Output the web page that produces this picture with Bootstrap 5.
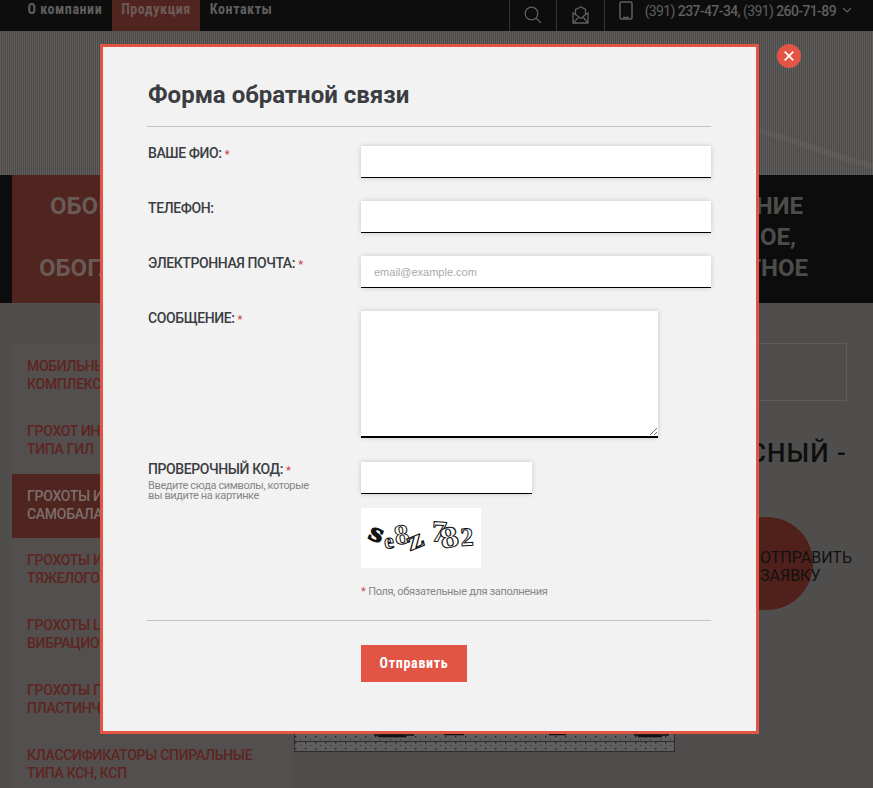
<!DOCTYPE html>
<html lang="ru"><head><meta charset="utf-8"><title>Форма обратной связи</title>
<link href="https://cdn.jsdelivr.net/npm/bootstrap@5.3.0/dist/css/bootstrap.min.css" rel="stylesheet">
<style>
html,body{height:788px;overflow:hidden}
body{background:#504e4d;font-family:Roboto,"Liberation Sans",sans-serif;position:relative}
.topbar{height:31px;background:#0d0d0d;color:#5f5f5f}
.toplink{font:700 14px/19px "Roboto Condensed","Liberation Sans Narrow",Roboto,sans-serif;letter-spacing:.55px;color:#5f5f5f;text-decoration:none;padding:0 9.5px;height:31px}
.toplink-on{background:#50251f;color:#6d5b57}
.topnav{padding-left:18px}
.topcell{width:47.5px;height:31px;border-left:1px solid #333}
.topcell svg{margin-top:-2px}
.phonecell{border-left:1px solid #333;height:31px;padding-left:14px;padding-right:21px;font-size:14px;font-weight:500;letter-spacing:-.6px;line-height:22px;gap:12px}
.chev{margin:7px 0 0 -6px}
.phicon{margin-top:1px}
.hero{height:144px;background:repeating-linear-gradient(90deg,#605e5c 0 1px,#4c4a49 1px 2px);overflow:hidden}
.hero svg{display:block}
.band{height:128px;background:#0c0c0c;color:#4e4c4a;font-size:24px;font-weight:700;line-height:31px;overflow:hidden}
.bandleft{width:290px;margin-left:12px;background:#50251f;color:#6a5a56;padding-top:16px;white-space:nowrap}
.bandright{padding-top:16px;padding-right:65px;text-align:right;white-space:nowrap}
.pl38{padding-left:38px}.pl27{padding-left:27px}.pr5{padding-right:5px}.pr12{padding-right:12px}
.sidemenu{width:282px;margin-left:12px;margin-top:41px;flex:none;background:#524f4e}
.sideitem{height:64.8px;padding:13px 15px 0;display:block;font-size:14px;font-weight:500;line-height:18px;letter-spacing:-.28px;text-transform:uppercase;color:#5f2420;text-decoration:none}
.sideitem-on{background:#50251f;color:#7d6f6b}
.maincol{flex:1;padding:40px 26px 0 0;min-width:0}
.topbox{height:58px;border:1px solid #5f5d5b}
.bigtitle{font-size:26px;font-weight:500;letter-spacing:1.05px;line-height:32px;color:#0e0e0e;margin:36px 0 0;white-space:nowrap}
.ctawrap{margin:48px -5px 0 0}
.cta{position:relative;font-size:16px;line-height:18px;color:#111;text-align:left;padding-top:32px;height:93px;width:92px}
.ctadot{position:absolute;left:-40px;top:0;width:93px;height:93px;border-radius:50%;background:#50201a}
.ctatxt{position:relative;display:block}
.drawing{margin:124px 0 0 0;display:block}
.dlg{position:absolute;left:100px;top:44px;width:659px;height:690px;border:3px solid #e25545;background:#f2f2f2;padding:25px 45px 0 44px;color:#3a3d42}
.dlgclose{position:absolute;left:777px;top:44px;width:24px;height:24px;border-radius:50%;background:#e25545;border:0;padding:0}
.dlgtitle{font-size:24px;font-weight:700;line-height:46px;margin:0;padding-left:1px;color:#3a3d42}
.dlgline{height:1px;background:#c4c4c4;margin:8px 0 0;opacity:1;border:0;width:564px}
.frow{display:flex;margin-bottom:23px}
.flabel{width:214px;flex:none;font-size:14px;font-weight:500;letter-spacing:-.4px;line-height:14px;padding-left:1px;color:#3a3d42}
.req{color:#cc4650;font-size:11px;letter-spacing:0}
.fhint{display:block;font-size:11px;font-weight:400;line-height:10px;letter-spacing:-.38px;color:#85878a;margin-top:3px}
.finput.form-control{width:352px;height:32px;border:0;border-bottom:1px solid #000;border-radius:0;background:#fff;box-shadow:0 0 5px rgba(0,0,0,.18);padding:0 13px;font-family:"Liberation Sans",sans-serif;font-size:11px}
.finput.form-control::placeholder{color:#a9a9a9}
.fshort.form-control{width:171px}
.farea.form-control{width:297px;height:127px;border:0;border-bottom:2px solid #000;border-radius:0;box-shadow:0 0 5px rgba(0,0,0,.18);background:#fff;min-height:0}
.capbox{display:block;margin:-16px 0 0 214px;background:#fff}
.capnote{margin:17px 0 0 214px;font-size:11px;line-height:14px;letter-spacing:-.35px;color:#85878a}
.sendbtn.btn{margin:24px 0 0 214px;width:106px;height:37px;background:#e25545;border:0;border-radius:0;color:#fff;padding:0;font:700 14px/37px "Roboto Condensed","Liberation Sans Narrow",Roboto,sans-serif;letter-spacing:.7px}
</style></head><body>
<div class="topbar d-flex">
 <nav class="topnav d-flex">
  <a class="toplink" href="#">О компании</a><a class="toplink toplink-on" href="#">Продукция</a><a class="toplink" href="#">Контакты</a>
 </nav>
 <div class="ms-auto d-flex">
  <div class="topcell d-flex align-items-center justify-content-center"><svg width="18" height="18" viewBox="0 0 18 18" fill="none" stroke="#5f5f5f" stroke-width="1.3"><circle cx="7.500" cy="7.500" r="6.300"/><path d="M12 12 17 17"/></svg></div>
  <div class="topcell d-flex align-items-center justify-content-center"><svg width="17" height="18" viewBox="0 0 17 18" fill="none" stroke="#5f5f5f" stroke-width="1.3"><path d="M1 7V17H16V7L13.500 8.500V3.500L9 1 3.500 3.500V8.500L1 7ZM3.500 8.500 9 12.500 13.500 8.500M1 17 7 11M16 17 11 11"/></svg></div>
  <div class="phonecell d-flex"><svg class="phicon" width="14" height="19" viewBox="0 0 14 19" fill="none" stroke="#5f5f5f" stroke-width="1.5"><rect x="1" y="1" width="12" height="17" rx="1.5"/><path d="M4 16.500H10"/></svg><span><span class="fw-normal">(391)</span> 237-47-34, <span class="fw-normal">(391)</span> 260-71-89</span><svg class="chev" width="10" height="6" viewBox="0 0 10 6" fill="none" stroke="#5f5f5f" stroke-width="1.2"><path d="M1 1 5 5 9 1"/></svg></div>
 </div>
</div>
<div class="hero"><svg width="873" height="144" viewBox="0 0 873 144" fill="none"><path d="M760 100C800 110 830 125 873 135" stroke="#fff" stroke-width="6" opacity=".04"/></svg></div>
<div class="band d-flex justify-content-between">
 <div class="bandleft"><div class="pl38">ОБОРУДОВАНИЕ</div><div>&nbsp;</div><div class="pl27">ОБОГАТИТЕЛЬНОЕ</div></div>
 <div class="bandright"><div class="pr5">ОБОРУДОВАНИЕ</div><div class="pr12">ДРОБИЛЬНОЕ,</div><div>ОБОРОТНОЕ</div></div>
</div>
<div class="d-flex">
 <aside class="sidemenu">
  <a class="sideitem" href="#">Мобильные дробильные комплексы</a>
  <a class="sideitem" href="#">Грохот инерционный<br>типа ГИЛ</a>
  <a class="sideitem sideitem-on" href="#">Грохоты инерционные самобалансные</a>
  <a class="sideitem" href="#">Грохоты инерционные<br>тяжелого типа</a>
  <a class="sideitem" href="#">Грохоты цилиндрические вибрационные</a>
  <a class="sideitem" href="#">Грохоты пластинчатые пластинчатого типа</a>
  <a class="sideitem" href="#">Классификаторы спиральные типа КСН, КСП</a>
 </aside>
 <main class="maincol">
  <div class="topbox"></div>
  <div class="d-flex justify-content-end"><h2 class="bigtitle">ГРОХОТ САМОБАЛАНСНЫЙ -</h2></div>
  <div class="ctawrap d-flex justify-content-end"><div class="cta"><span class="ctadot"></span><span class="ctatxt">ОТПРАВИТЬ ЗАЯВКУ</span></div></div>
  <svg class="drawing" width="381" height="18" viewBox="0 0 381 18">
   <defs><pattern id="dots" width="10" height="6" patternUnits="userSpaceOnUse"><rect width="1.4" height="1.4" x="1" y="2" fill="#222"/><rect width="1.2" height="1.2" x="6" y="5" fill="#333"/></pattern></defs>
   <rect width="381" height="18" fill="#605e5c"/>
   <rect width="381" height="18" fill="url(#dots)"/>
   <path d="M0 7.500H381M0 17.500H381M.5 0V18M380.5 0V18" stroke="#222" stroke-width=".8"/>
   <path d="M80 1H120M84 2.500H112M340 1H375M344 2.500H368M150 .5H170M255 .5H272" stroke="#111" stroke-width="1.400"/>
  </svg>
 </main>
</div>
<section class="dlg" role="dialog">
 <h1 class="dlgtitle">Форма обратной связи</h1>
 <hr class="dlgline">
 <form class="mt-0">
  <div class="frow" style="margin-top:19px"><label class="flabel">ВАШЕ ФИО: <span class="req">*</span></label><input class="finput form-control" type="text"></div>
  <div class="frow"><label class="flabel">ТЕЛЕФОН:</label><input class="finput form-control" type="text"></div>
  <div class="frow"><label class="flabel">ЭЛЕКТРОННАЯ ПОЧТА: <span class="req">*</span></label><input class="finput form-control" type="text" placeholder="email@example.com"></div>
  <div class="frow" style="margin-bottom:24px"><label class="flabel">СООБЩЕНИЕ: <span class="req">*</span></label><textarea class="farea form-control"></textarea></div>
  <div class="frow"><label class="flabel">ПРОВЕРОЧНЫЙ КОД: <span class="req">*</span><span class="fhint">Введите сюда символы, которые<br>вы видите на картинке</span></label><input class="finput fshort form-control" type="text"></div>
  <svg class="capbox" width="120" height="60" viewBox="0 0 120 60" font-family="Liberation Serif, serif" font-weight="700" fill="#fff" stroke="#111" stroke-width="1">
   <text transform="translate(6 30) rotate(24) scale(1.3 1)" font-size="28" fill="#111">s</text>
   <text transform="translate(24 41) rotate(-8)" font-size="22">e</text>
   <text transform="translate(35 37) rotate(-10) scale(1.05 1)" font-size="28">8</text>
   <text transform="translate(49 43) rotate(-22) scale(1.4 1)" font-size="27">z</text>
   <text transform="translate(70 33) rotate(4)" font-size="30">7</text>
   <text transform="translate(81 41) rotate(-12) scale(1.25 1)" font-size="30">8</text>
   <text transform="translate(100 38) rotate(-4)" font-size="26">2</text>
  </svg>
  <p class="capnote"><span class="req">*</span> Поля, обязательные для заполнения</p>
  <hr class="dlgline" style="margin-top:21px">
  <button class="sendbtn btn" type="button">Отправить</button>
 </form>
</section>
<button class="dlgclose d-flex align-items-center justify-content-center" aria-label="Закрыть"><svg width="10" height="10" viewBox="0 0 10 10" stroke="#fff" stroke-width="1.700"><path d="M.7.7 9.300 9.300M9.300.7.7 9.300"/></svg></button>
<script src="https://cdn.jsdelivr.net/npm/bootstrap@5.3.0/dist/js/bootstrap.bundle.min.js"></script>
</body></html>
